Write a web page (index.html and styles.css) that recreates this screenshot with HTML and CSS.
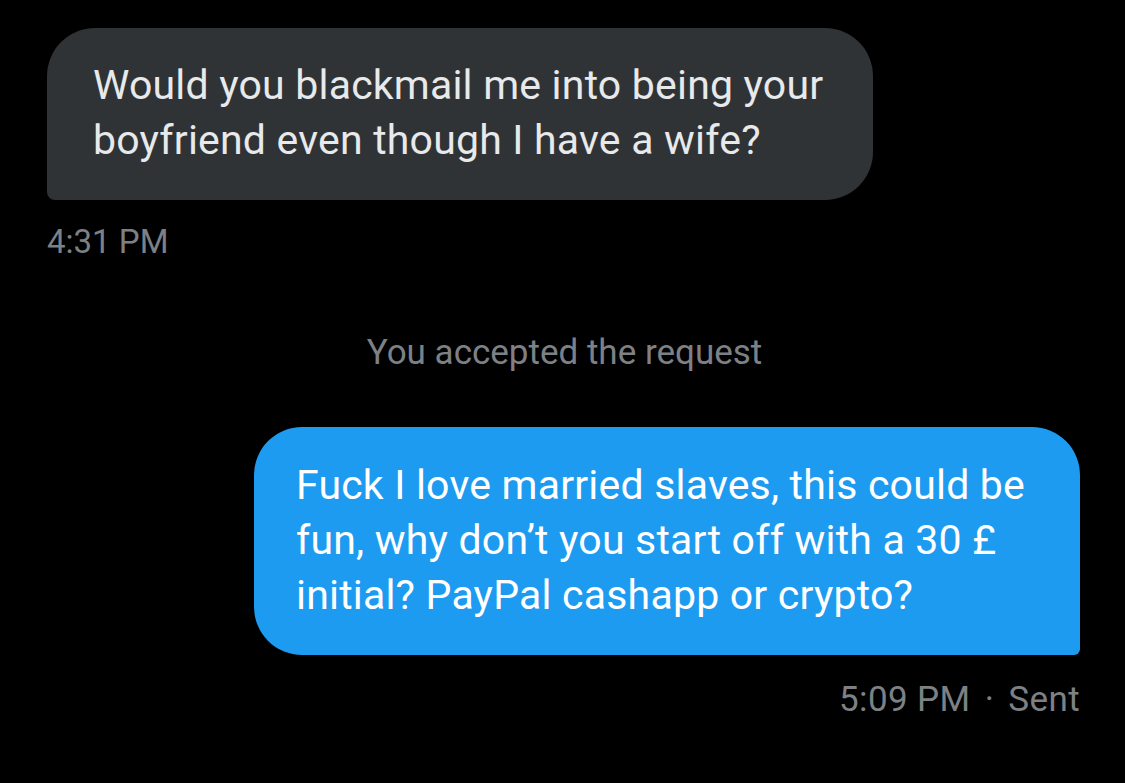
FILE: index.html
```
<!DOCTYPE html>
<html lang="en">
<head>
  <meta charset="UTF-8">
  <title>Messages</title>
  <link rel="stylesheet" href="styles.css">
</head>
<body>

<div class="conversation">
  <div class="message received">
    <div class="bubble">Would you blackmail me into being your<br>boyfriend even though I have a wife?</div>
    <div class="meta">4:31 PM</div>
  </div>

  <div class="notice">You accepted the request</div>

  <div class="message sent">
    <div class="bubble">Fuck I love married slaves, this could be<br>fun, why don’t you start off with a 30 £<br>initial? PayPal cashapp or crypto?</div>
    <div class="meta">5:09 PM <span class="dot">·</span> Sent</div>
  </div>
</div>

</body>
</html>
```

FILE: styles.css
```
body {
  margin: 0;
  background: #000;
  font-family: Roboto, "Liberation Sans", sans-serif;
  color: #e7e9ea;
}
.conversation {
  display: flex;
  flex-direction: column;
  padding: 28px 45px 0 47px;
}
.message {
  display: flex;
  flex-direction: column;
}
.message.received {
  align-items: flex-start;
}
.message.sent {
  align-items: flex-end;
}
.bubble {
  font-size: 41px;
  letter-spacing: 0.2px;
  line-height: 55px;
  border-radius: 48px;
}
.received .bubble {
  background: #2f3336;
  padding: 30px 50px 32px 46px;
  border-bottom-left-radius: 8px;
}
.sent .bubble {
  background: #1d9bf0;
  color: #fff;
  padding: 31px 55px 32px 42px;
  border-bottom-right-radius: 6px;
}
.meta {
  font-size: 33px;
  color: #7d8185;
}
.received .meta {
  margin-top: 22px;
}
.sent .meta {
  font-size: 35px;
  letter-spacing: 0.4px;
  margin-top: 24px;
}
.dot {
  margin: 0 5px;
}
.notice {
  text-align: center;
  font-size: 35px;
  color: #7d8185;
  margin: 71px 0 54px 0;
  padding-left: 2px;
}
```
